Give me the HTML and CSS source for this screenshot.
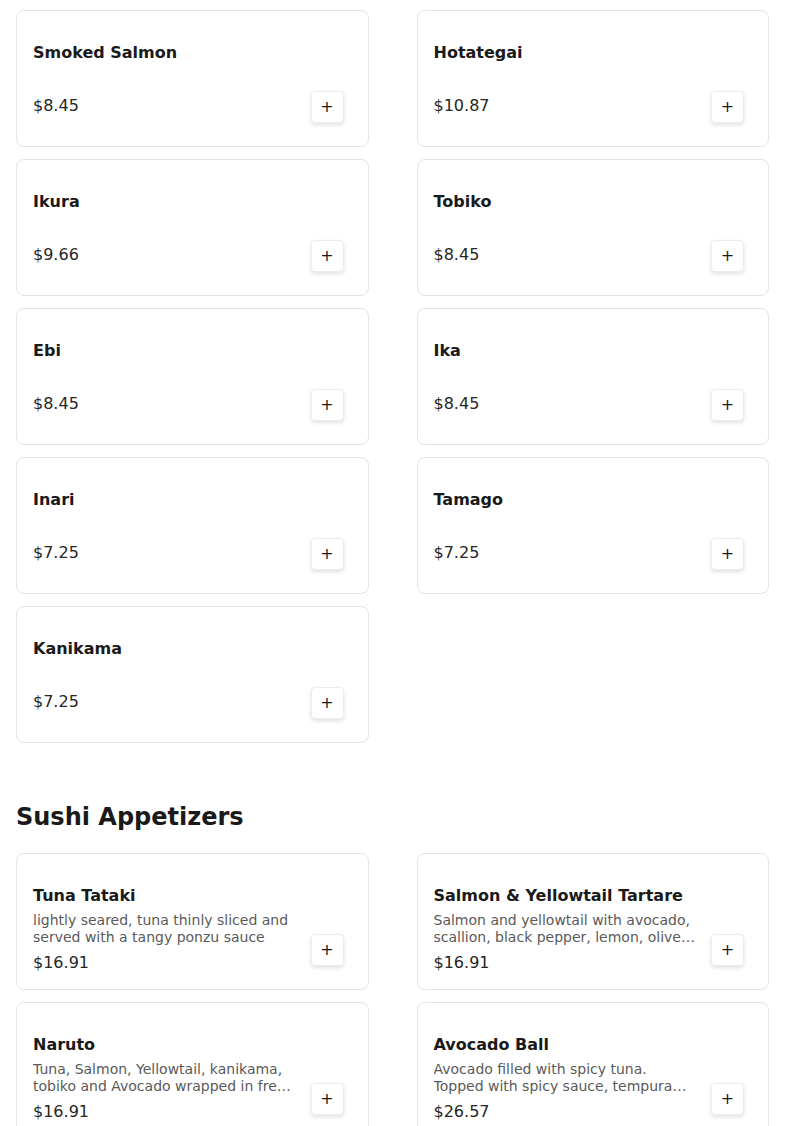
FILE: index.html
```html
<!DOCTYPE html>
<html lang="en">
<head>
<meta charset="utf-8">
<title>Menu</title>
<link rel="stylesheet" href="styles.css">
</head>
<body>
<section class="section">
  <div class="grid">
    <div class="card"><div class="info"><div class="name">Smoked Salmon</div><div class="spacer"></div><div class="price">$8.45</div></div><button class="add">+</button></div>
    <div class="card"><div class="info"><div class="name">Hotategai</div><div class="spacer"></div><div class="price">$10.87</div></div><button class="add">+</button></div>
    <div class="card"><div class="info"><div class="name">Ikura</div><div class="spacer"></div><div class="price">$9.66</div></div><button class="add">+</button></div>
    <div class="card"><div class="info"><div class="name">Tobiko</div><div class="spacer"></div><div class="price">$8.45</div></div><button class="add">+</button></div>
    <div class="card"><div class="info"><div class="name">Ebi</div><div class="spacer"></div><div class="price">$8.45</div></div><button class="add">+</button></div>
    <div class="card"><div class="info"><div class="name">Ika</div><div class="spacer"></div><div class="price">$8.45</div></div><button class="add">+</button></div>
    <div class="card"><div class="info"><div class="name">Inari</div><div class="spacer"></div><div class="price">$7.25</div></div><button class="add">+</button></div>
    <div class="card"><div class="info"><div class="name">Tamago</div><div class="spacer"></div><div class="price">$7.25</div></div><button class="add">+</button></div>
    <div class="card"><div class="info"><div class="name">Kanikama</div><div class="spacer"></div><div class="price">$7.25</div></div><button class="add">+</button></div>
  </div>
</section>
<section class="section">
  <h2 class="heading">Sushi Appetizers</h2>
  <div class="grid">
    <div class="card"><div class="info"><div class="name">Tuna Tataki</div><div class="desc">lightly seared, tuna thinly sliced and served with a tangy ponzu sauce</div><div class="price">$16.91</div></div><button class="add">+</button></div>
    <div class="card"><div class="info"><div class="name">Salmon &amp; Yellowtail Tartare</div><div class="desc">Salmon and yellowtail with avocado, scallion, black pepper, lemon, olive oil and wasabi dressing</div><div class="price">$16.91</div></div><button class="add">+</button></div>
    <div class="card"><div class="info"><div class="name">Naruto</div><div class="desc">Tuna, Salmon, Yellowtail, kanikama, tobiko and Avocado wrapped in fresh cucumber with ponzu sauce</div><div class="price">$16.91</div></div><button class="add">+</button></div>
    <div class="card"><div class="info"><div class="name">Avocado Ball</div><div class="desc">Avocado filled with spicy tuna. Topped with spicy sauce, tempura flakes and eel sauce</div><div class="price">$26.57</div></div><button class="add">+</button></div>
  </div>
</section>
</body>
</html>
```
FILE: styles.css
```css
* { box-sizing: border-box; }
body {
  margin: 0;
  padding: 10px 16px 0;
  background: #ffffff;
  color: #1a1a1a;
  font-family: "DejaVu Sans", "Liberation Sans", sans-serif;
}
.section { margin-bottom: 58px; }
.grid {
  display: grid;
  grid-template-columns: 1fr 1fr;
  column-gap: 48px;
  row-gap: 12px;
}
.heading {
  margin: 0 0 20px;
  font-size: 24px;
  line-height: 32px;
  font-weight: bold;
  color: #1a1a1a;
}
.card {
  height: 137px;
  border: 1px solid #e4e4e4;
  border-radius: 8px;
  padding: 30px 24px 23px 16px;
  display: flex;
  align-items: flex-end;
  gap: 16px;
  background: #fff;
}
.info {
  flex: 1;
  min-width: 0;
  align-self: flex-start;
  display: flex;
  flex-direction: column;
}
.name {
  font-size: 16px;
  line-height: 24px;
  font-weight: bold;
  color: #1a1a1a;
}
.spacer { height: 29px; }
.desc {
  margin: 4px 0 5px;
  font-size: 14px;
  line-height: 17px;
  color: #5a5a5a;
  display: -webkit-box;
  -webkit-line-clamp: 2;
  -webkit-box-orient: vertical;
  overflow: hidden;
}
.price {
  font-size: 16px;
  line-height: 24px;
  color: #262626;
}
.add {
  flex: none;
  width: 33px;
  height: 32px;
  padding: 0;
  border: 1px solid #ececec;
  border-radius: 4px;
  background: #fff;
  box-shadow: 0 2px 4px rgba(0, 0, 0, 0.12);
  font-family: "DejaVu Sans", sans-serif;
  font-size: 16px;
  line-height: 30px;
  color: #1a1a1a;
  cursor: pointer;
}
```
